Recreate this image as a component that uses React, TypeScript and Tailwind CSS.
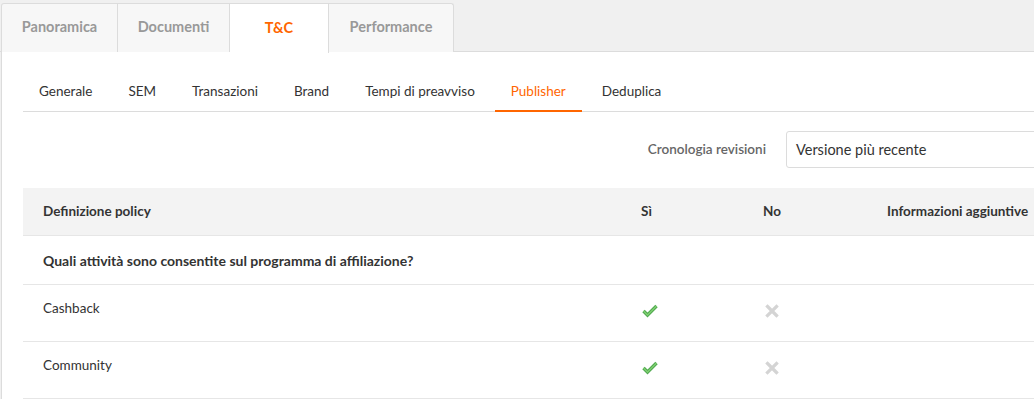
import { useState } from "react";

const topTabs = ["Panoramica", "Documenti", "T&C", "Performance"];
const subTabs = ["Generale", "SEM", "Transazioni", "Brand", "Tempi di preavviso", "Publisher", "Deduplica"];

const rows = [
  { label: "Cashback", yes: true },
  { label: "Community", yes: true },
];

const CheckIcon = () => (
  <svg width="16" height="14" viewBox="0 0 16 14">
    <path d="M1.5 7 L5.5 11 L14.5 2" fill="none" stroke="#4fa84f" strokeWidth="3.4" strokeLinejoin="miter" />
    <path d="M1.5 7 L5.5 11 L14.5 2" fill="none" stroke="#7fd071" strokeWidth="1.3" />
  </svg>
);

const CrossIcon = () => (
  <svg width="14" height="14" viewBox="0 0 14 14">
    <path d="M2.5 2.5 L11.5 11.5 M11.5 2.5 L2.5 11.5" stroke="#d4d4d4" strokeWidth="3.2" strokeLinecap="square" />
  </svg>
);

const App = () => {
  const [top, setTop] = useState("T&C");
  const [sub, setSub] = useState("Publisher");

  return (
    <div className="w-[1034px] h-[399px] overflow-hidden bg-[#f0f0f0] font-['Lato',sans-serif] text-[13.5px] text-[#333]">
      <div className="flex h-[52px] pt-[3px] border-b border-[#dcdcdc]">
        {topTabs.map((t, i) => {
          const active = t === top;
          return (
            <button
              key={t}
              onClick={() => setTop(t)}
              className={`h-[49px] pb-[2px] border-t border-r border-[#dcdcdc] text-[14.5px] font-bold ${
                i === 0 ? "border-l rounded-tl-[3px] ml-[1px]" : ""
              } ${i === topTabs.length - 1 ? "rounded-tr-[3px]" : ""} ${
                active ? "bg-white text-[#ff6600] h-[50px] -mb-[1px]" : "bg-[#f7f7f7] text-[#999]"
              } ${
                t === "Panoramica" ? "w-[117px]" : t === "Documenti" ? "w-[112px]" : t === "T&C" ? "w-[99px]" : "w-[125px]"
              }`}
            >
              {t}
            </button>
          );
        })}
      </div>

      <div className="bg-white ml-[1px] border-l border-[#dcdcdc] pl-[21px] h-[347px]">
        <div className="flex gap-1 h-[60px] items-end border-b border-[#dcdcdc]">
          {subTabs.map((t) => {
            const active = t === sub;
            return (
              <button
                key={t}
                onClick={() => setSub(t)}
                className={`px-4 pb-[9px] -mb-[1px] border-b-2 ${
                  active ? "border-[#ff6600] text-[#ff6600]" : "border-transparent text-[#333]"
                }`}
              >
                {t}
              </button>
            );
          })}
        </div>

        <div className="flex justify-end items-center h-[76px] pb-[1px]">
          <span className="text-[#666] font-semibold mr-5">Cronologia revisioni</span>
          <div className="w-[260px] h-[37px] border border-[#dcdcdc] rounded-[3px] flex items-center px-[9px] text-[14.5px] text-[#333] -mr-[12px]">
            Versione più recente
          </div>
        </div>

        <div className="grid grid-cols-[598px_122px_124px_1fr] items-center bg-[#f3f3f3] h-[48px] border-b border-[#e6e6e6] font-bold">
          <div className="pl-5">Definizione policy</div>
          <div className="pl-5">Sì</div>
          <div className="pl-5">No</div>
          <div className="pl-5 whitespace-nowrap">Informazioni aggiuntive</div>
        </div>

        <div className="h-[49px] flex items-center pl-5 border-b border-[#e6e6e6] font-bold text-[14px]">
          Quali attività sono consentite sul programma di affiliazione?
        </div>

        {rows.map((r) => (
          <div key={r.label} className="grid grid-cols-[598px_122px_124px_1fr] items-center h-[57px] border-b border-[#e6e6e6]">
            <div className="pl-5 -mt-[10px]">{r.label}</div>
            <div className="pl-[21px] -mt-[5px]">{r.yes ? <CheckIcon /> : <CrossIcon />}</div>
            <div className="pl-[22px] -mt-[5px]">{r.yes ? <CrossIcon /> : <CheckIcon />}</div>
            <div />
          </div>
        ))}
      </div>
    </div>
  );
};

export default App;
